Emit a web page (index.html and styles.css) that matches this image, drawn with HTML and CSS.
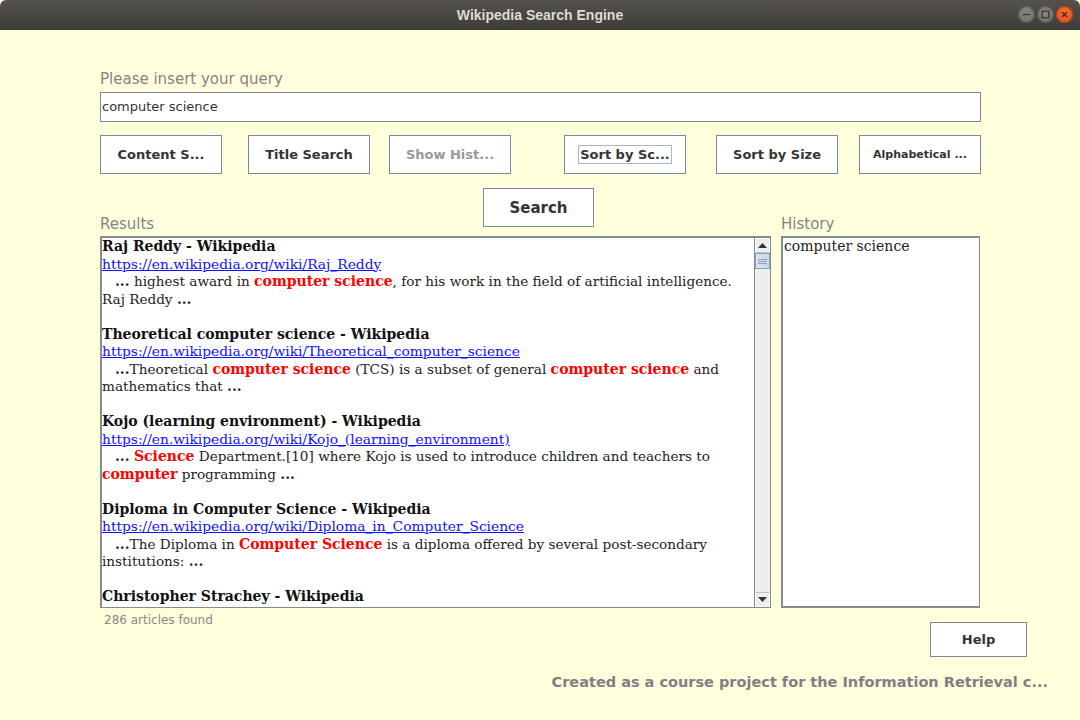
FILE: index.html
```html
<!DOCTYPE html>
<html>
<head>
<meta charset="utf-8">
<link rel="stylesheet" href="styles.css">
</head>
<body>
<div class="window">
  <div class="titlebar">
    <div class="title">Wikipedia Search Engine</div>
    <div class="wbtns">
      <span class="wbtn min"><svg width="17" height="17" viewBox="0 0 17 17"><path d="M5 8.5h7" stroke="#3a3935" stroke-width="1.4"/></svg></span>
      <span class="wbtn max"><svg width="17" height="17" viewBox="0 0 17 17"><rect x="5.2" y="5.2" width="6.6" height="6.6" fill="none" stroke="#3a3935" stroke-width="1.3"/></svg></span>
      <span class="wbtn close"><svg width="17" height="17" viewBox="0 0 17 17"><path d="M6 6l5 5M11 6l-5 5" stroke="#4a2010" stroke-width="1.3"/></svg></span>
    </div>
  </div>
  <div class="content">
    <div class="label query-label">Please insert your query</div>
    <div class="input">computer science</div>
    <div class="btn-row">
      <div class="btn">Content S...</div>
      <div class="btn b2">Title Search</div>
      <div class="btn b3 disabled">Show Hist...</div>
      <div class="btn b4"><span class="focus">Sort by Sc...</span></div>
      <div class="btn b5">Sort by Size</div>
      <div class="btn b6 small">Alphabetical ...</div>
    </div>
    <div class="mid-row">
      <div class="label results-label">Results</div>
      <div class="btn search">Search</div>
      <div class="label history-label">History</div>
    </div>
    <div class="panes">
      <div class="results">
        <div class="results-text">
          <div class="entry">
            <div class="t">Raj Reddy - Wikipedia</div>
            <div><a>https://en.wikipedia.org/wiki/Raj_Reddy</a></div>
            <div>&nbsp;&nbsp;&nbsp;<b>...</b> highest award in <b class="hl">computer science</b>, for his work in the field of artificial intelligence.</div>
            <div>Raj Reddy <b>...</b></div>
          </div>
          <div class="entry">
            <div class="t">Theoretical computer science - Wikipedia</div>
            <div><a>https://en.wikipedia.org/wiki/Theoretical_computer_science</a></div>
            <div>&nbsp;&nbsp;&nbsp;<b>...</b>Theoretical <b class="hl">computer science</b> (TCS) is a subset of general <b class="hl">computer science</b> and</div>
            <div>mathematics that <b>...</b></div>
          </div>
          <div class="entry">
            <div class="t">Kojo (learning environment) - Wikipedia</div>
            <div><a>https://en.wikipedia.org/wiki/Kojo_(learning_environment)</a></div>
            <div>&nbsp;&nbsp;&nbsp;<b>...</b> <b class="hl">Science</b> Department.[10] where Kojo is used to introduce children and teachers to</div>
            <div><b class="hl">computer</b> programming <b>...</b></div>
          </div>
          <div class="entry">
            <div class="t">Diploma in Computer Science - Wikipedia</div>
            <div><a>https://en.wikipedia.org/wiki/Diploma_in_Computer_Science</a></div>
            <div>&nbsp;&nbsp;&nbsp;<b>...</b>The Diploma in <b class="hl">Computer Science</b> is a diploma offered by several post-secondary</div>
            <div>institutions: <b>...</b></div>
          </div>
          <div class="entry">
            <div class="t">Christopher Strachey - Wikipedia</div>
            <div><a>https://en.wikipedia.org/wiki/Christopher_Strachey</a></div>
          </div>
        </div>
        <div class="scrollbar">
          <div class="arrow up"><svg width="9" height="5" viewBox="0 0 9 5"><path d="M0 5L4.5 0L9 5Z" fill="#333"/></svg></div>
          <div class="thumb"><span></span><span></span><span></span></div>
          <div class="track"></div>
          <div class="arrow down"><svg width="9" height="5" viewBox="0 0 9 5"><path d="M0 0L4.5 5L9 0Z" fill="#333"/></svg></div>
        </div>
      </div>
      <div class="history">computer science</div>
    </div>
    <div class="bottom-row">
      <div class="count">286 articles found</div>
      <div class="btn help">Help</div>
    </div>
    <div class="footer">Created as a course project for the Information Retrieval c...</div>
  </div>
</div>
</body>
</html>
```
FILE: styles.css
```css
* { box-sizing: border-box; }
html, body { margin: 0; padding: 0; }
body { width: 1080px; height: 720px; overflow: hidden; background: #ffffdc; }
.window { width: 1080px; height: 720px; display: flex; flex-direction: column; }
.titlebar {
  height: 30px; flex: none; position: relative;
  background: linear-gradient(#55524c, #3d3c38);
  display: flex; align-items: center; justify-content: center;
  border-radius: 6px 6px 0 0;
}
.title { font-family: "Liberation Sans", sans-serif; font-weight: bold; font-size: 14px; color: #dfdbd2; }
.wbtns { position: absolute; right: 7px; top: 6px; display: flex; gap: 2px; }
.wbtn { width: 17px; height: 17px; border-radius: 50%; display: block; }
.wbtn svg { display: block; }
.min, .max { background: radial-gradient(circle at 50% 40%, #8a8780, #6b6964); box-shadow: inset 0 0 0 1px #55534e; }
.close { background: radial-gradient(circle at 50% 40%, #f4703f, #df4a16); box-shadow: inset 0 0 0 1px #b03d12; }

.content { flex: 1; background: #ffffdc; font-family: "DejaVu Sans", sans-serif; display: flex; flex-direction: column; padding-left: 100px; }
.label { color: #858585; font-size: 15px; line-height: 18px; }
.query-label { margin-top: 40px; height: 22px; }
.input {
  width: 881px; height: 30px; background: #fff; border: 1px solid #7f8790;
  font-size: 13px; color: #333; padding: 5px 1px; line-height: 18px;
}
.btn-row { display: flex; margin-top: 13px; height: 39px; }
.btn {
  width: 122px; height: 39px; background: #fff; border: 1px solid #7a8a99;
  display: flex; align-items: center; justify-content: center;
  font-weight: bold; font-size: 13px; color: #333;
}
.b2 { margin-left: 26px; }
.b3 { margin-left: 19px; }
.b4 { margin-left: 53px; }
.b5 { margin-left: 30px; }
.b6 { margin-left: 21px; }
.disabled { color: #999; }
.small { font-size: 11px; }
.focus { border: 1px solid #a3b8cc; padding: 0 1px; line-height: 17px; }

.mid-row { display: flex; align-items: flex-end; height: 62px; position: relative; }
.results-label { width: 383px; padding-bottom: 3px; }
.search { align-self: flex-start; margin-top: 14px; width: 111px; height: 39px; font-size: 15px; font-weight: 600; margin-right: 187px; }
.history-label { padding-bottom: 3px; }

.panes { display: flex; height: 372px; gap: 10px; }
.results {
  width: 671px; height: 372px; background: #fff; border: 2px solid #848b93; border-right: 1px solid #848b93; border-bottom: 1px solid #848b93;
  display: flex; overflow: hidden;
}
.results-text {
  flex: 1; overflow: hidden; font-family: "DejaVu Serif", serif; font-size: 13.6px; line-height: 17.5px; color: #222; white-space: nowrap;
}
.entry { margin-bottom: 17.5px; }
.t { font-weight: bold; color: #111; font-size: 14px; }
.results-text a { color: #1010ff; text-decoration: underline; font-size: 13.8px; }
.results-text b { font-weight: bold; font-size: 14px; }
.hl { color: #ff0000; }
.scrollbar { width: 16px; flex: none; background: #eeeeee; border-left: 1px solid #848b93; display: flex; flex-direction: column; }
.arrow { height: 15px; display: flex; align-items: center; justify-content: center; background: #eee; border: 1px solid #fff; border-bottom-color: #b8c4cf; }
.arrow.down { border-top-color: #b8c4cf; border-bottom-color: #fff; }
.thumb {
  height: 16px; background: linear-gradient(90deg, #dbe6f0, #c8d7e6); border: 1px solid #8aa0b8;
  display: flex; flex-direction: column; align-items: center; justify-content: center; gap: 1px;
}
.thumb span { width: 9px; height: 1px; background: #8aa0b8; display: block; }
.track { flex: 1; }
.history {
  width: 199px; height: 372px; background: #fff; border: 2px solid #848b93; border-right: 1px solid #848b93; border-bottom: 2px solid #848b93;
  font-family: "DejaVu Serif", serif; font-size: 14px; line-height: 17.5px; color: #222; padding-left: 1px;
}
.bottom-row { display: flex; width: 927px; height: 49px; }
.count { font-size: 12px; color: #888; padding-left: 4px; padding-top: 4px; line-height: 16px; }
.help { margin-left: auto; margin-top: 14px; width: 97px; height: 35px; font-size: 13px; }
.footer { align-self: flex-end; margin-right: 32px; margin-top: 16px; font-size: 14.5px; font-weight: bold; color: #808084; line-height: 18px; }
```
